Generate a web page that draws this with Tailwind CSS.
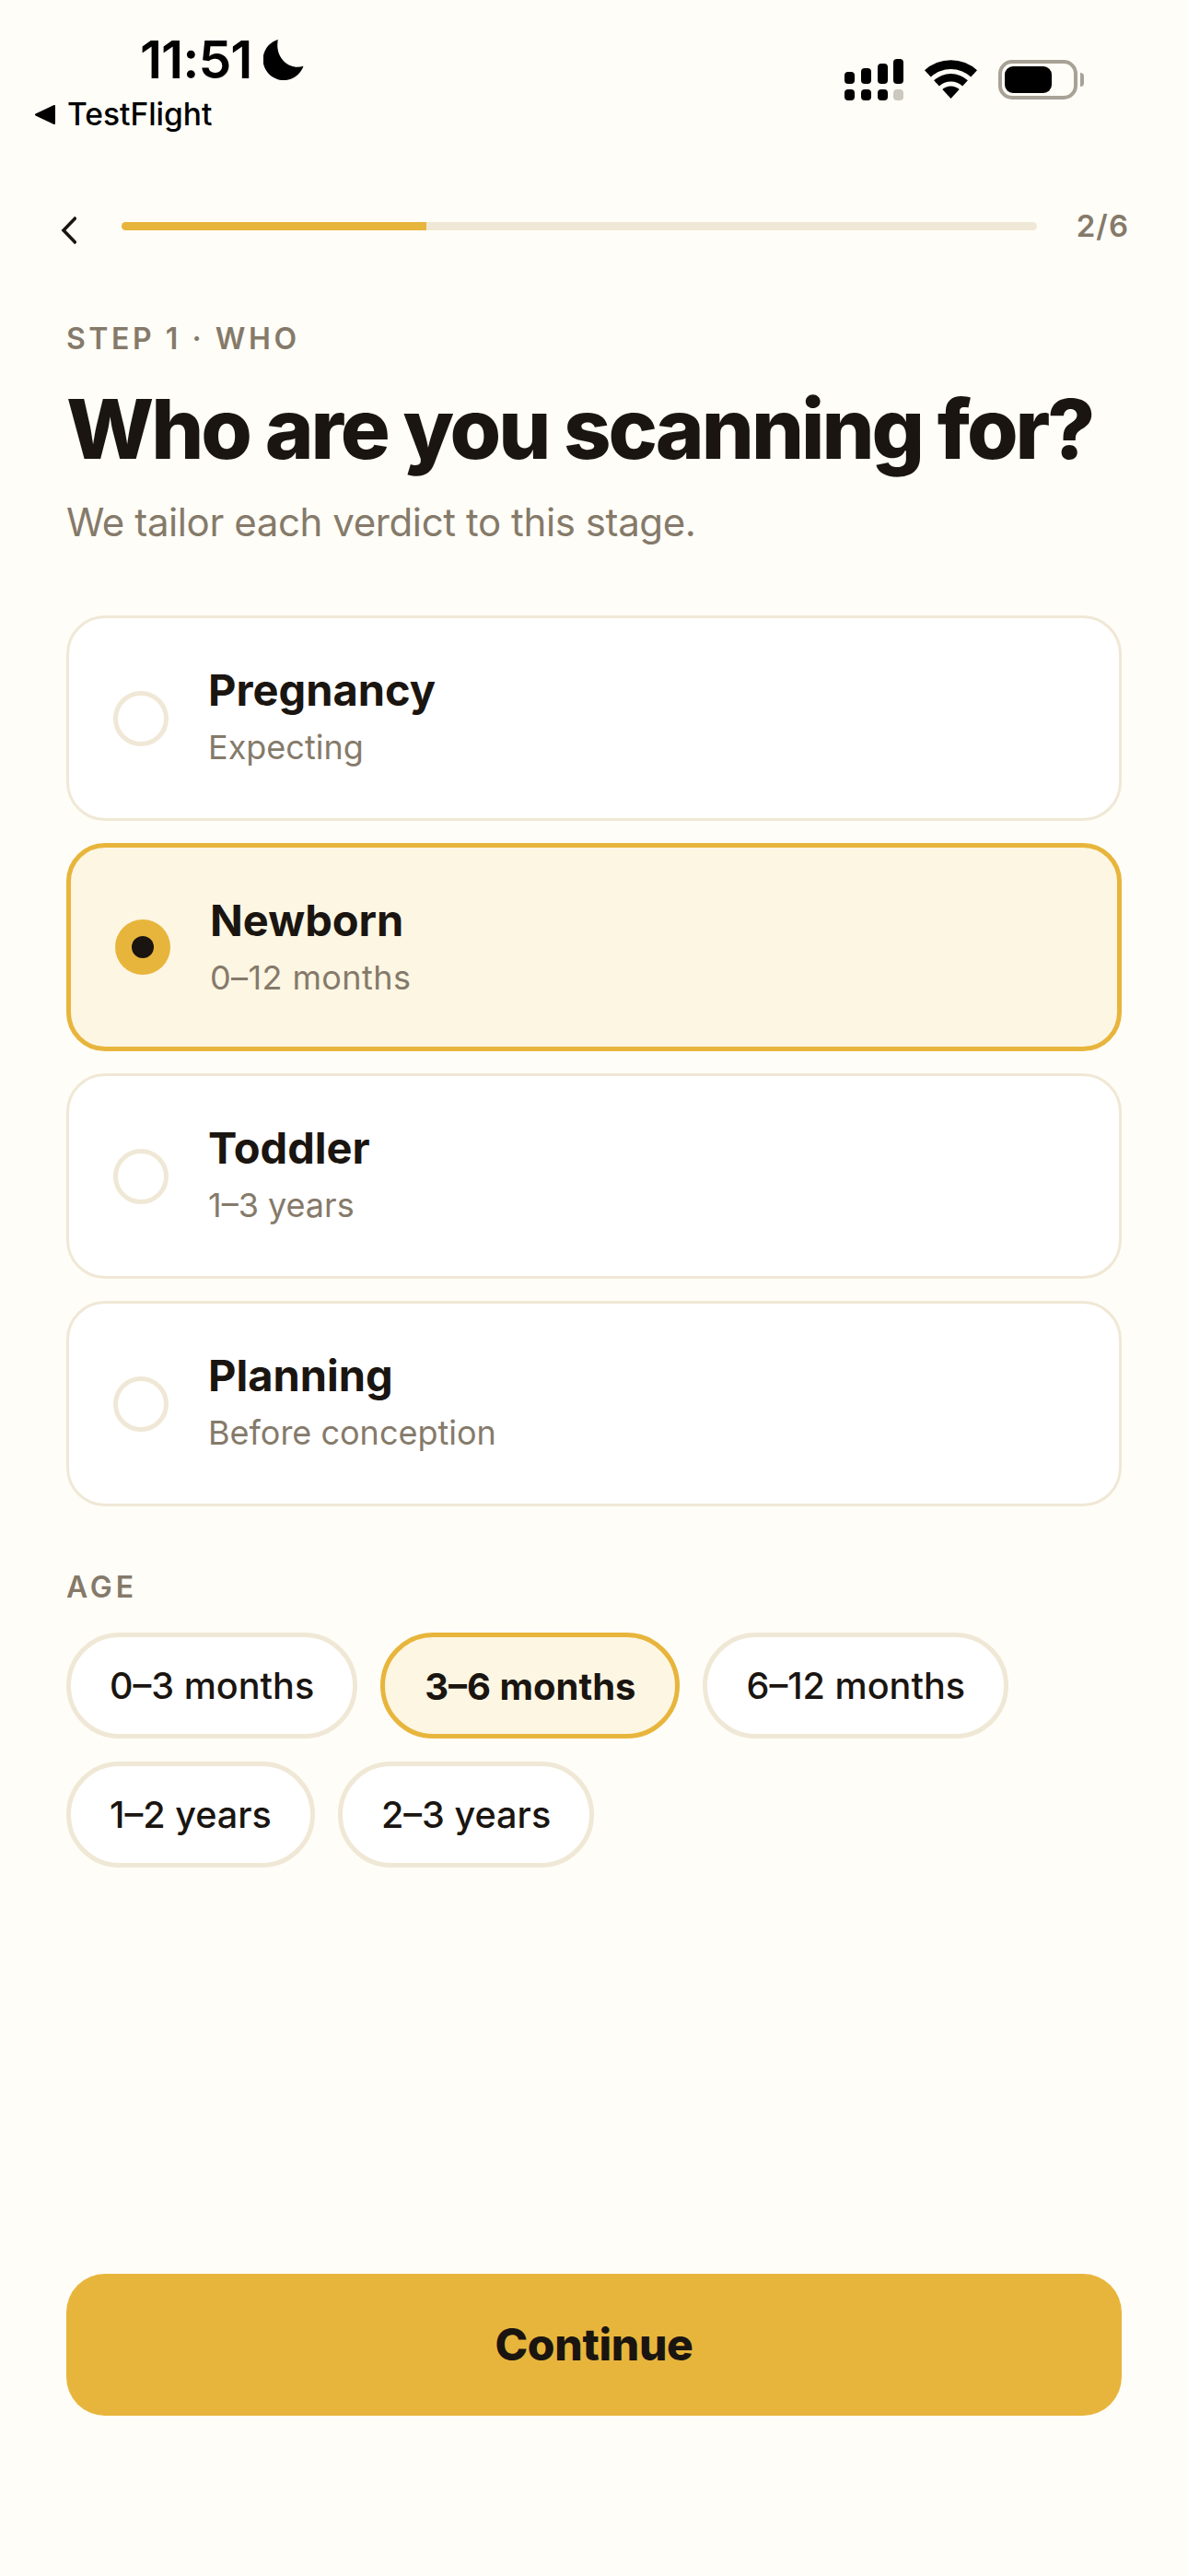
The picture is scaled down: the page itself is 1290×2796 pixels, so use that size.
<!DOCTYPE html>
<html lang="en">
<head>
<meta charset="utf-8">
<title>Who are you scanning for?</title>
<script src="https://cdn.jsdelivr.net/npm/@tailwindcss/browser@4"></script>
</head>
<body class="bg-[#FFFDF7]">
<div class="w-[1290px] h-[2796px] flex flex-col font-['Inter',sans-serif] text-[#1A1510] bg-[#FFFDF7] overflow-hidden">
  <!-- Status bar -->
  <div class="h-[200px] flex justify-between shrink-0">
    <div class="pl-[38px] pt-[35px] flex flex-col">
      <div class="ml-[114px] flex items-center gap-[13px] h-[60px] text-black">
        <span class="text-[57px] leading-[60px] font-semibold tracking-[-1px]">11:51</span>
        <svg class="w-[44px] h-[44px]" viewBox="0 0 42 43" fill="#000"><path d="M15,0 A22 22 0 1 0 42,28 C28,33 11,20 15,0 Z"/></svg>
      </div>
      <div class="mt-[9px] flex items-center gap-[13px] h-[40px] text-black">
        <svg class="w-[22px] h-[21px]" viewBox="0 0 22 21" fill="#000" stroke="#000" stroke-width="2" stroke-linejoin="round"><path d="M21,1 V20 L1,10.5 Z"/></svg>
        <span class="text-[33.5px] leading-[40px] font-medium">TestFlight</span>
      </div>
    </div>
    <div class="pt-[64px] pr-[113px] flex items-start">
      <svg class="w-[64px] h-[45px]" viewBox="0 0 64 45">
        <g fill="#000">
          <rect x="0" y="14" width="11" height="13" rx="4"/><rect x="18" y="10" width="11" height="17" rx="4"/><rect x="36" y="5" width="11" height="22" rx="4"/><rect x="53" y="0" width="11" height="27" rx="4"/>
          <rect x="0" y="33" width="11" height="12" rx="4"/><rect x="18" y="33" width="11" height="12" rx="4"/><rect x="36" y="33" width="11" height="12" rx="4"/>
        </g>
        <rect x="53" y="33" width="11" height="12" rx="4" fill="#CBC8C0"/>
      </svg>
      <svg class="ml-[23px] mt-[1px] w-[57px] h-[42px]" viewBox="0 0 57 42" fill="#000">
        <path d="M0,11.3 A42 42 0 0 1 57,11.3 L50.3,18.6 A32 32 0 0 0 6.7,18.6 Z"/>
        <path d="M10.1,22.3 A27 27 0 0 1 46.9,22.3 L41.1,28.5 A18.5 18.5 0 0 0 15.9,28.5 Z"/>
        <path d="M19.3,32.1 A13.5 13.5 0 0 1 37.7,32.1 L28.5,42 Z"/>
      </svg>
      <div class="ml-[23px] mt-[1px] flex items-center">
        <div class="w-[86px] h-[43px] rounded-[15px] border-[4px] border-[#A8A196] p-[3px]">
          <div class="w-[51px] h-[29px] rounded-[9px] bg-black"></div>
        </div>
        <div class="ml-[3px] w-[4px] h-[15px] rounded-r-full bg-[#A8A196]"></div>
      </div>
    </div>
  </div>

  <!-- Progress row -->
  <div class="h-[90px] shrink-0 pl-[66px] pr-[64px] flex items-center">
    <svg class="w-[17px] h-[30px] mt-[10px] shrink-0" viewBox="0 0 17 30" fill="none" stroke="#1A1510" stroke-width="3.6"><path d="M16.5,1 L3,15 L16.5,29"/></svg>
    <div class="ml-[49px] flex-1 h-[9px] rounded-full bg-[#F0E8D6] overflow-hidden">
      <div class="w-1/3 h-full bg-[#E8B53C]"></div>
    </div>
    <span class="ml-[43px] text-[33px] leading-[40px] font-semibold tracking-[1px] text-[#857A6A]">2/6</span>
  </div>

  <!-- Content -->
  <div class="flex-1 flex flex-col px-[72px] pb-[174px]">
    <div class="mt-[58px] text-[32px] leading-[40px] font-semibold tracking-[3.55px] text-[#857A6A]">STEP 1 · WHO</div>
    <h1 class="mt-[28px] text-[90px] leading-[100px] font-[850] tracking-[-3.05px] whitespace-nowrap">Who are you scanning for?</h1>
    <p class="mt-[21px] text-[42px] leading-[60px] tracking-[-0.4px] text-[#857A6A]">We tailor each verdict to this stage.</p>

    <div class="mt-[71px] flex flex-col gap-[24px]">
      <div class="h-[223px] rounded-[42px] border-[3px] border-[#F0E8D6] bg-white pl-[48px] flex items-center gap-[43px]">
        <div class="w-[60px] h-[60px] rounded-full border-[5px] border-[#F0E8D6]"></div>
        <div class="flex flex-col gap-[6px] mb-[8px]">
          <div class="text-[47px] leading-[64px] font-bold">Pregnancy</div>
          <div class="text-[36px] leading-[48px] text-[#857A6A]">Expecting</div>
        </div>
      </div>
      <div class="h-[226px] rounded-[42px] border-[5px] border-[#E8B53C] bg-[#FDF6E3] pl-[48px] flex items-center gap-[43px]">
        <div class="w-[60px] h-[60px] rounded-full bg-[#E8B53C] flex items-center justify-center">
          <div class="w-[24px] h-[24px] rounded-full bg-[#1A1510]"></div>
        </div>
        <div class="flex flex-col gap-[6px] mb-[5px]">
          <div class="text-[47px] leading-[64px] font-bold">Newborn</div>
          <div class="text-[36px] leading-[48px] tracking-[0.4px] text-[#857A6A]">0–12 months</div>
        </div>
      </div>
      <div class="h-[223px] rounded-[42px] border-[3px] border-[#F0E8D6] bg-white pl-[48px] flex items-center gap-[43px]">
        <div class="w-[60px] h-[60px] rounded-full border-[5px] border-[#F0E8D6]"></div>
        <div class="flex flex-col gap-[6px] mb-[8px]">
          <div class="text-[47px] leading-[64px] font-bold">Toddler</div>
          <div class="text-[36px] leading-[48px] text-[#857A6A]">1–3 years</div>
        </div>
      </div>
      <div class="h-[223px] rounded-[42px] border-[3px] border-[#F0E8D6] bg-white pl-[48px] flex items-center gap-[43px]">
        <div class="w-[60px] h-[60px] rounded-full border-[5px] border-[#F0E8D6]"></div>
        <div class="flex flex-col gap-[6px] mb-[8px]">
          <div class="text-[47px] leading-[64px] font-bold">Planning</div>
          <div class="text-[36px] leading-[48px] text-[#857A6A]">Before conception</div>
        </div>
      </div>
    </div>

    <div class="mt-[68px] text-[32px] leading-[40px] font-semibold tracking-[0.12em] text-[#857A6A]">AGE</div>
    <div class="mt-[29px] flex flex-wrap gap-[25px]">
      <div class="h-[115px] px-[42px] pt-[2px] rounded-full border-[5px] border-[#F0E8D6] bg-white flex items-center text-[39.6px] font-medium">0–3 months</div>
      <div class="h-[115px] px-[43px] pt-[2px] rounded-full border-[5px] border-[#E8B53C] bg-[#FDF6E3] flex items-center text-[40px] font-bold">3–6 months</div>
      <div class="h-[115px] px-[42px] pt-[2px] rounded-full border-[5px] border-[#F0E8D6] bg-white flex items-center text-[39.6px] font-medium">6–12 months</div>
      <div class="h-[115px] px-[42px] pt-[2px] rounded-full border-[5px] border-[#F0E8D6] bg-white flex items-center text-[39.6px] font-medium">1–2 years</div>
      <div class="h-[115px] px-[42px] pt-[2px] rounded-full border-[5px] border-[#F0E8D6] bg-white flex items-center text-[39.6px] font-medium">2–3 years</div>
    </div>

    <div class="mt-auto h-[154px] rounded-[42px] bg-[#E8B53C] flex items-center justify-center text-[48px] font-extrabold tracking-[-0.3px]">Continue</div>
  </div>
</div>
</body>
</html>
